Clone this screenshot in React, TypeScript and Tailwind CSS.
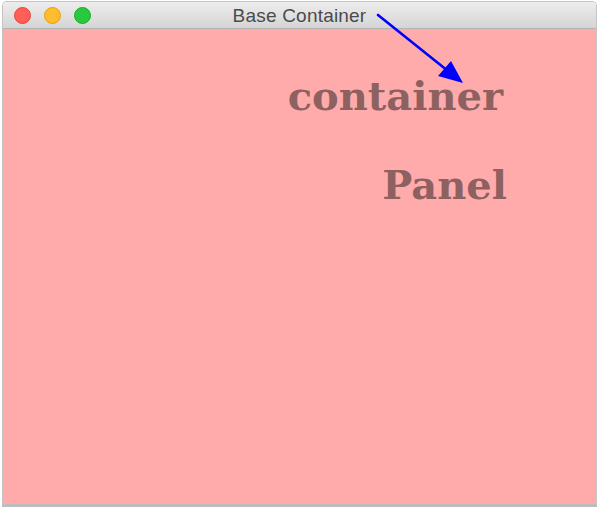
export default function App() {
  return (
    <div className="w-[600px] h-[507px] bg-white pl-[2px] pr-[3px] pt-[1px] overflow-hidden">
      <div className="relative flex h-full flex-col rounded-t-[5px] border border-[#c4c4c4] border-b-[3px] border-b-[#bdbdbd]">
        {/* title bar */}
        <div className="relative flex h-[27px] shrink-0 items-center justify-center rounded-t-[5px] border-b border-[#b4b4b4] bg-gradient-to-b from-[#ededed] to-[#d5d5d5]">
          <div className="absolute left-[11px] top-[5px] flex gap-[13px]">
            <span className="h-[17px] w-[17px] rounded-full border border-[#e2463f] bg-[#fe5f57]" />
            <span className="h-[17px] w-[17px] rounded-full border border-[#e1a116] bg-[#febc2e]" />
            <span className="h-[17px] w-[17px] rounded-full border border-[#1aab29] bg-[#28c840]" />
          </div>
          <span className="pt-[2px] text-[19px] tracking-[0.2px] text-[#4b4b4b] [font-family:'Liberation_Sans',Arial,sans-serif]">
            Base Container
          </span>
        </div>

        {/* content */}
        <div className="flex flex-1 flex-col items-end gap-[49px] bg-[#ffabab] pr-[88px] pt-[47px] font-bold leading-none text-[#8e6161] [font-family:'DejaVu_Serif',serif]">
          <div className="mr-[5px] text-[40px]">container</div>
          <div className="mr-[1px] text-[40px]">Panel</div>
        </div>

        {/* annotation arrow */}
        <svg className="absolute left-[-3px] top-[-1px]" width="600" height="120" viewBox="0 0 600 120">
          <line x1="378" y1="14" x2="448" y2="70" stroke="#0000ff" strokeWidth="2.6" strokeLinecap="round" />
          <polygon points="463,82 438,75 451,60" fill="#0000ff" />
        </svg>
      </div>
    </div>
  )
}
